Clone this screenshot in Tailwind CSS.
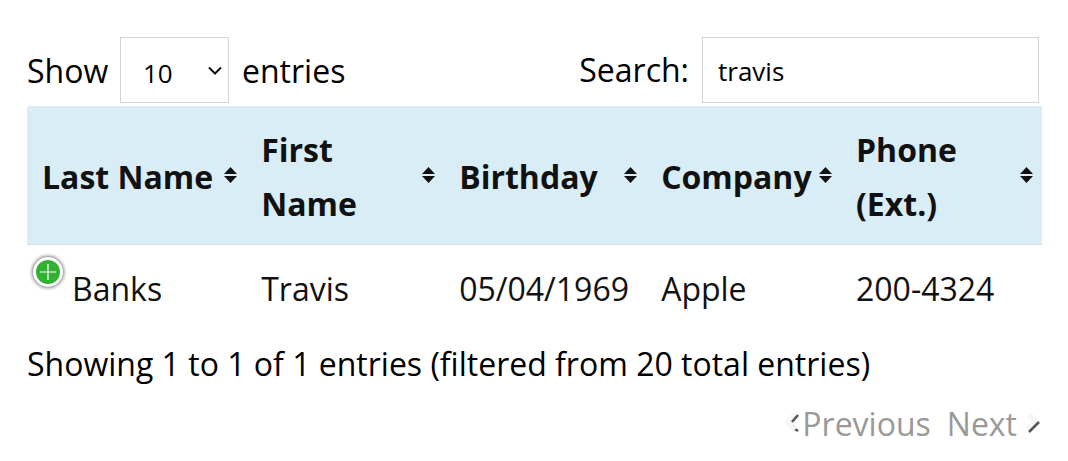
<!DOCTYPE html>
<html lang="en">
<head>
    <meta charset="UTF-8">
    <meta name="viewport" content="width=device-width, initial-scale=1.0">
    <title>Contacts</title>
    <script src="https://cdn.jsdelivr.net/npm/@tailwindcss/browser@4"></script>
</head>
<body class="bg-white pl-[27px] pr-[26px] pt-[37px] font-['Open_Sans','Noto_Sans',sans-serif] text-[32px] leading-[54px] text-black">
    <!-- Toolbar -->
    <div class="flex items-start justify-between pr-[3px] pb-[3px]">
        <div class="flex items-center">
            <label for="length" class="w-[93px] pt-[2px]">Show</label>
            <div class="relative">
                <select id="length" class="block h-[66px] w-[109px] appearance-none border border-[#d4d4d4] bg-white pt-[6px] pl-[22px] text-[26px]">
                    <option>10</option>
                    <option>25</option>
                    <option>50</option>
                </select>
                <svg class="pointer-events-none absolute top-[29px] right-[7px] h-[10px] w-[14px]" viewBox="0 0 14 10" fill="none" stroke="#111" stroke-width="2">
                    <path d="M1 1.5 7 7.5 13 1.5"/>
                </svg>
            </div>
            <span class="pt-[2px] pl-[13px]">entries</span>
        </div>
        <div class="flex items-center">
            <label for="search" class="pr-[13px]">Search:</label>
            <input id="search" type="text" value="travis" class="h-[66px] w-[337px] border border-[#d4d4d4] bg-white px-[15px] pt-px text-[26px]">
        </div>
    </div>

    <!-- Table -->
    <table class="w-full table-fixed border-collapse text-[#111]">
        <colgroup>
            <col class="w-[21.6%]">
            <col class="w-[19.5%]">
            <col class="w-[19.9%]">
            <col class="w-[19.2%]">
            <col>
        </colgroup>
        <thead class="bg-[#d9edf7]">
            <tr class="h-[138px] border-b border-[#ddd]">
                <th class="p-0">
                    <button type="button" class="flex w-full items-center justify-between pt-[5px] pr-[9px] pl-[15px] text-left font-bold whitespace-nowrap">
                        Last Name
                        <svg class="mb-1 h-4 w-[13px] shrink-0" viewBox="0 0 13 16" fill="#111"><path d="M6.5 0 13 7H0zM0 9h13l-6.500 7z"/></svg>
                    </button>
                </th>
                <th class="p-0">
                    <button type="button" class="flex w-full items-center justify-between pt-[5px] pr-[9px] pl-[15px] text-left font-bold">
                        <span>First<br>Name</span>
                        <svg class="mb-1 h-4 w-[13px] shrink-0" viewBox="0 0 13 16" fill="#111"><path d="M6.5 0 13 7H0zM0 9h13l-6.500 7z"/></svg>
                    </button>
                </th>
                <th class="p-0">
                    <button type="button" class="flex w-full items-center justify-between pt-[5px] pr-[9px] pl-[15px] text-left font-bold">
                        Birthday
                        <svg class="mb-1 h-4 w-[13px] shrink-0" viewBox="0 0 13 16" fill="#111"><path d="M6.5 0 13 7H0zM0 9h13l-6.500 7z"/></svg>
                    </button>
                </th>
                <th class="p-0">
                    <button type="button" class="flex w-full items-center justify-between pt-[5px] pr-[9px] pl-[15px] text-left font-bold">
                        Company
                        <svg class="mb-1 h-4 w-[13px] shrink-0" viewBox="0 0 13 16" fill="#111"><path d="M6.5 0 13 7H0zM0 9h13l-6.500 7z"/></svg>
                    </button>
                </th>
                <th class="p-0">
                    <button type="button" class="flex w-full items-center justify-between pt-[5px] pr-[9px] pl-[15px] text-left font-bold">
                        <span>Phone<br>(Ext.)</span>
                        <svg class="mb-1 h-4 w-[13px] shrink-0" viewBox="0 0 13 16" fill="#111"><path d="M6.5 0 13 7H0zM0 9h13l-6.500 7z"/></svg>
                    </button>
                </th>
            </tr>
        </thead>
        <tbody>
            <tr class="h-[89px]">
                <td class="relative pl-[45px]">
                    <button type="button" aria-label="Show details" class="absolute top-3 left-[6px] flex size-[30px] items-center justify-center rounded-full border-[3px] border-white bg-[#31b131] shadow-[0_0_4px_#333]">
                        <svg class="size-4" viewBox="0 0 16 16" stroke="#fff" stroke-width="1.2"><path d="M8 0v16M0 8h16"/></svg>
                    </button>
                    Banks
                </td>
                <td class="pl-[15px]">Travis</td>
                <td class="pl-[15px]">05/04/1969</td>
                <td class="pl-[15px]">Apple</td>
                <td class="pl-[15px]">200-4324</td>
            </tr>
        </tbody>
    </table>

    <!-- Footer -->
    <p class="pt-1">Showing 1 to 1 of 1 entries (filtered from 20 total entries)</p>
    <div class="flex justify-end gap-4 pt-[6px] text-[#999]">
        <button type="button" class="flex items-center gap-[3px]">
            <svg class="h-[22px] w-4" viewBox="0 0 16 22" fill="none">
                <path d="M12 2 5 9l7 8" stroke="#f6f6f6" stroke-width="6"/>
                <path d="m15 2-6 7M12 16l3 2" stroke="#555" stroke-width="2.500"/>
                <path d="m9 10 4 6" stroke="#eee" stroke-width="1.500"/>
            </svg>
            Previous
        </button>
        <button type="button" class="flex items-center gap-[9px]">
            Next
            <svg class="h-[22px] w-4" viewBox="0 0 16 22" fill="none">
                <path d="m3 2 7 7-8 8" stroke="#f6f6f6" stroke-width="6"/>
                <path d="M13 9 3 19" stroke="#555" stroke-width="2.500"/>
            </svg>
        </button>
    </div>
</body>
</html>
